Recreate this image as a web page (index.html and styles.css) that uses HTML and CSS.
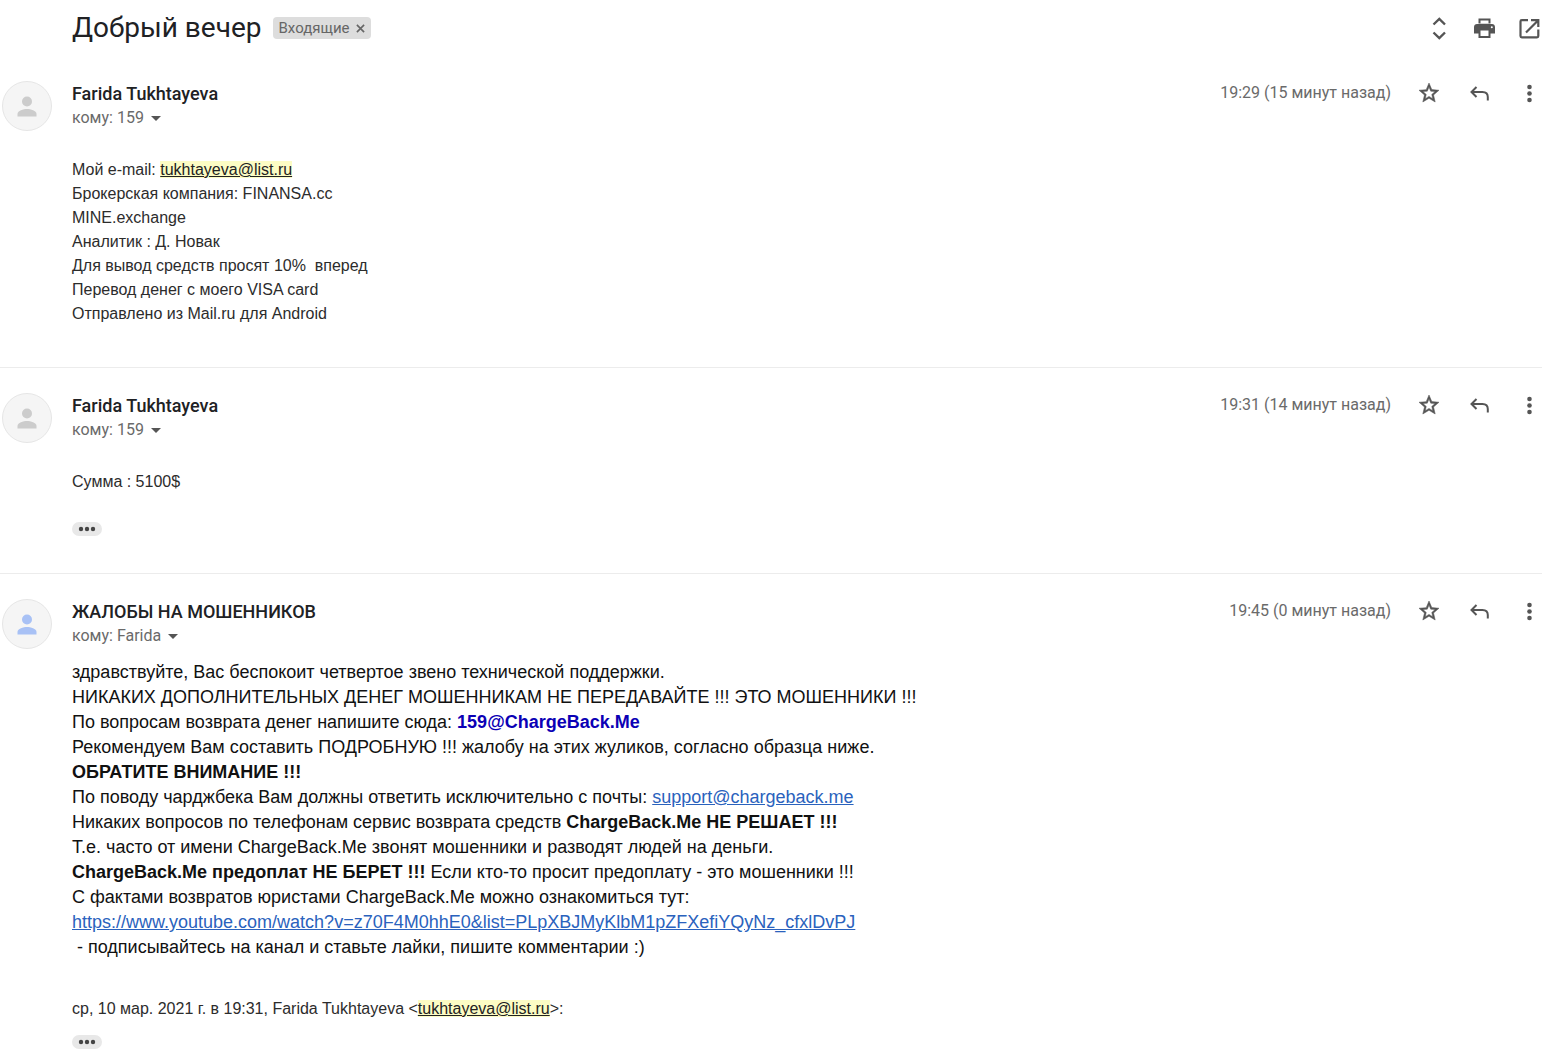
FILE: index.html
```html
<!DOCTYPE html>
<html lang="ru">
<head>
<meta charset="utf-8">
<title>Добрый вечер</title>
<link rel="stylesheet" href="styles.css">
</head>
<body>
<svg class="sprite" aria-hidden="true">
  <symbol id="star" viewBox="0 0 24 24"><path stroke="currentColor" stroke-width=".5" d="M22 9.24l-7.19-.62L12 2 9.19 8.63 2 9.24l5.46 4.73L5.82 21 12 17.27 18.18 21l-1.63-7.03L22 9.24zM12 15.4l-3.76 2.27 1-4.28-3.32-2.88 4.38-.38L12 6.1l1.71 4.04 4.38.38-3.32 2.88 1 4.28L12 15.4z"/></symbol>
  <symbol id="reply" viewBox="0 0 24 24"><path d="M9.500 6 4.500 11 9.500 16M4.500 11H15.500Q20.800 11 20.800 16V19.500" fill="none" stroke="currentColor" stroke-width="2"/></symbol>
  <symbol id="more" viewBox="0 0 24 24"><circle cx="12.500" cy="6" r="2.300"/><circle cx="12.500" cy="12.500" r="2.300"/><circle cx="12.500" cy="19" r="2.300"/></symbol>
  <symbol id="person" viewBox="0 0 24 24"><circle cx="12" cy="7.500" r="5"/><path d="M2.500 22.500v-2.500c0-3.500 6-5 9.500-5s9.500 1.500 9.500 5v2.500z"/></symbol>
  <symbol id="dots" viewBox="0 0 18 6"><circle cx="3" cy="3" r="2.200"/><circle cx="9" cy="3" r="2.200"/><circle cx="15" cy="3" r="2.200"/></symbol>
</svg>
<main class="thread">
  <header class="subject">
    <h1 class="subject-title">Добрый вечер</h1>
    <span class="label">Входящие<button class="label-remove" aria-label="Удалить ярлык"><svg viewBox="0 0 10 10"><path d="M1 1 9 9M9 1 1 9" fill="none" stroke="currentColor" stroke-width="1.800"/></svg></button></span>
    <div class="actions thread-actions">
      <button class="icon" aria-label="Развернуть все"><svg viewBox="0 0 24 24"><path d="M6.500 8.500 12.300 3 18 8.500M6.500 16.500 12.300 22 18 16.500" fill="none" stroke="currentColor" stroke-width="2.400"/></svg></button>
      <button class="icon" aria-label="Печать"><svg viewBox="0 0 24 24"><path fill-rule="evenodd" d="M18.500 2.500H6.500v5h12zM20 8H5c-1.700 0-3 1.300-3 3v6.500h4.500v4.500h12v-4.500H23V11c0-1.700-1.300-3-3-3zM16.500 20h-8v-5.500h8zM19.800 12.300a1 1 0 1 1 0-2 1 1 0 0 1 0 2z"/><path d="M8.500 4.500h8v3h-8z" fill="#fff"/></svg></button>
      <button class="icon" aria-label="В новом окне"><svg viewBox="0 0 24 24"><path d="M11 4.200H4.800q-1.300 0-1.300 1.300v14.500q0 1.300 1.300 1.300h15.200q1.300 0 1.300-1.300V13.500M14 4.200h7.300V11M21 4.500 9 16.500" fill="none" stroke="currentColor" stroke-width="2.200"/></svg></button>
    </div>
  </header>

  <article class="message">
    <div class="avatar"><svg><use href="#person"/></svg></div>
    <header class="message-head">
      <div class="sender"><h2 class="name">Farida Tukhtayeva</h2><button class="recipient">кому: 159</button></div>
      <div class="meta"><time class="time">19:29 (15 минут назад)</time><div class="actions">
        <button class="icon" aria-label="Пометить"><svg><use href="#star"/></svg></button>
        <button class="icon" aria-label="Ответить"><svg><use href="#reply"/></svg></button>
        <button class="icon" aria-label="Ещё"><svg><use href="#more"/></svg></button>
      </div></div>
    </header>
    <div class="body">
      <p>Мой e-mail: <a class="mark" href="mailto:tukhtayeva@list.ru">tukhtayeva@list.ru</a></p>
      <p>Брокерская компания: FINANSA.cc</p>
      <p>MINE.exchange</p>
      <p>Аналитик : Д. Новак</p>
      <p>Для вывод средств просят 10%&nbsp; вперед</p>
      <p>Перевод денег с моего VISA card</p>
      <p>Отправлено из Mail.ru для Android</p>
    </div>
  </article>

  <article class="message">
    <div class="avatar"><svg><use href="#person"/></svg></div>
    <header class="message-head">
      <div class="sender"><h2 class="name">Farida Tukhtayeva</h2><button class="recipient">кому: 159</button></div>
      <div class="meta"><time class="time">19:31 (14 минут назад)</time><div class="actions">
        <button class="icon" aria-label="Пометить"><svg><use href="#star"/></svg></button>
        <button class="icon" aria-label="Ответить"><svg><use href="#reply"/></svg></button>
        <button class="icon" aria-label="Ещё"><svg><use href="#more"/></svg></button>
      </div></div>
    </header>
    <div class="body">
      <p>Сумма : 5100$</p>
      <button class="trimmed after-text" aria-label="Показать скрытый текст"><svg><use href="#dots"/></svg></button>
    </div>
  </article>

  <article class="message">
    <div class="avatar own"><svg><use href="#person"/></svg></div>
    <header class="message-head">
      <div class="sender"><h2 class="name">ЖАЛОБЫ НА МОШЕННИКОВ</h2><button class="recipient">кому: Farida</button></div>
      <div class="meta"><time class="time">19:45 (0 минут назад)</time><div class="actions">
        <button class="icon" aria-label="Пометить"><svg><use href="#star"/></svg></button>
        <button class="icon" aria-label="Ответить"><svg><use href="#reply"/></svg></button>
        <button class="icon" aria-label="Ещё"><svg><use href="#more"/></svg></button>
      </div></div>
    </header>
    <div class="body reply">
      <div class="large">
        <p>здравствуйте, Вас беспокоит четвертое звено технической поддержки.</p>
        <p>НИКАКИХ ДОПОЛНИТЕЛЬНЫХ ДЕНЕГ МОШЕННИКАМ НЕ ПЕРЕДАВАЙТЕ !!! ЭТО МОШЕННИКИ !!!</p>
        <p>По вопросам возврата денег напишите сюда: <b class="address">159@ChargeBack.Me</b></p>
        <p>Рекомендуем Вам составить ПОДРОБНУЮ !!! жалобу на этих жуликов, согласно образца ниже.</p>
        <p><b>ОБРАТИТЕ ВНИМАНИЕ !!!</b></p>
        <p>По поводу чарджбека Вам должны ответить исключительно с почты: <a class="link" href="mailto:support@chargeback.me">support@chargeback.me</a></p>
        <p>Никаких вопросов по телефонам сервис возврата средств <b>ChargeBack.Me НЕ РЕШАЕТ !!!</b></p>
        <p>Т.е. часто от имени ChargeBack.Me звонят мошенники и разводят людей на деньги.</p>
        <p><b>ChargeBack.Me предоплат НЕ БЕРЕТ !!!</b> Если кто-то просит предоплату - это мошенники !!!</p>
        <p>С фактами возвратов юристами ChargeBack.Me можно ознакомиться тут:</p>
        <p><a class="link" href="https://www.youtube.com/watch?v=z70F4M0hhE0&amp;list=PLpXBJMyKlbM1pZFXefiYQyNz_cfxlDvPJ">https://www.youtube.com/watch?v=z70F4M0hhE0&amp;list=PLpXBJMyKlbM1pZFXefiYQyNz_cfxlDvPJ</a></p>
        <p>&nbsp;- подписывайтесь на канал и ставьте лайки, пишите комментарии :)</p>
      </div>
      <p class="quote">ср, 10 мар. 2021 г. в 19:31, Farida Tukhtayeva &lt;<a class="mark" href="mailto:tukhtayeva@list.ru">tukhtayeva@list.ru</a>&gt;:</p>
      <button class="trimmed" aria-label="Показать скрытый текст"><svg><use href="#dots"/></svg></button>
    </div>
  </article>
</main>
</body>
</html>
```
FILE: styles.css
```css
* { box-sizing: border-box; }
body { margin: 0; background: #fff; color: #2c2c2c; font-family: "Liberation Sans", Arial, sans-serif; font-size: 16px; line-height: 24px; }
h1, h2, p { margin: 0; }
button { border: 0; padding: 0; background: none; font: inherit; color: inherit; cursor: pointer; }
svg { display: block; fill: currentColor; }
.sprite { position: absolute; width: 0; height: 0; }

.thread { margin-right: 18px; }
.subject { display: flex; align-items: center; height: 56px; padding-left: 72px; }
.subject-title { font: 400 28px/36px Roboto, sans-serif; color: #202124; }
.label { display: flex; align-items: center; gap: 6px; height: 22px; margin-left: 11px; padding: 0 6px; border-radius: 4px; background: #ddd; color: #666; font: 15px/22px Roboto, sans-serif; }
.label-remove svg { width: 9px; height: 9px; }

.actions { display: flex; gap: 26px; margin-left: auto; padding-right: 1px; color: #555; }
.thread-actions { gap: 21px; }
.icon { width: 24px; height: 24px; }
.icon svg { width: 24px; height: 24px; }

.message { display: grid; grid-template-columns: 50px minmax(0, 1fr); column-gap: 20px; padding: 25px 0 41px 2px; }
.message + .message { border-top: 1px solid #ececec; }
.message + .message { padding-bottom: 37px; }
.message:last-child { padding-bottom: 10px; }
.avatar { display: grid; place-items: center; width: 50px; height: 50px; border: 1px solid #e6e6e6; border-radius: 50%; background: #f5f5f5; color: #ccc; }
.avatar svg { width: 24px; height: 24px; }
.avatar.own { color: #a8c1f5; }
.message-head { display: flex; justify-content: space-between; align-items: flex-start; font-family: Roboto, sans-serif; }
.name { font-size: 18px; line-height: 25px; font-weight: 500; color: #202124; }
.recipient { display: flex; align-items: center; gap: 7px; font-size: 16px; line-height: 24px; color: #6a6a6a; }
.recipient::after { content: ""; border: 5px solid transparent; border-top-color: #555; border-bottom: 0; }
.meta { display: flex; gap: 26px; }
.time { font-size: 16px; color: #6a6a6a; }

.body { grid-column: 2; margin-top: 27px; }
.body.reply { margin-top: 11px; }
.large { font-size: 18px; line-height: 25px; color: #111; }
.address { color: #0b00b5; }
.link { color: #2a62bd; }
.mark { background: #fcfcc4; color: #222; }
.quote { margin: 37px 0 14px; }
.trimmed { display: grid; place-items: center; width: 30px; height: 14px; border-radius: 7px; background: #e8e8e8; color: #444; }
.trimmed svg { width: 18px; height: 6px; }
.after-text { margin-top: 28px; }
```
